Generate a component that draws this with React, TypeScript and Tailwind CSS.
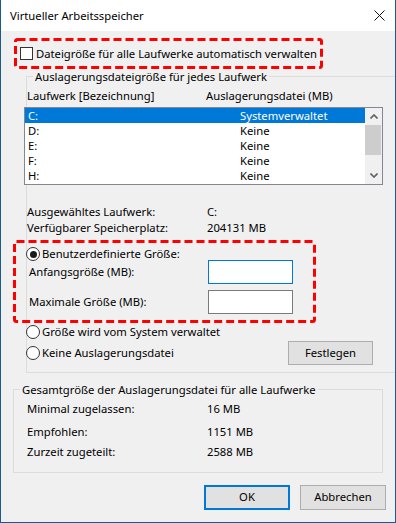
import React from 'react';

const drives = [
  { name: 'C:', size: 'Systemverwaltet', selected: true },
  { name: 'D:', size: 'Keine' },
  { name: 'E:', size: 'Keine' },
  { name: 'F:', size: 'Keine' },
  { name: 'H:', size: 'Keine' },
];

const totals = [
  { label: 'Minimal zugelassen:', value: '16 MB', top: 'mt-[4px]' },
  { label: 'Empfohlen:', value: '1151 MB', top: 'mt-[7px]' },
  { label: 'Zurzeit zugeteilt:', value: '2588 MB', top: 'mt-[4px]' },
];

// red annotation frame drawn over the dialog
const DashedFrame = ({ className }: { className: string }) => (
  <svg className={`pointer-events-none absolute ${className}`} width="100%" height="100%">
    <rect
      x="1.5"
      y="1.5"
      width="calc(100% - 3px)"
      height="calc(100% - 3px)"
      rx="2"
      fill="none"
      stroke="#ff0000"
      strokeWidth="3"
      strokeDasharray="8 4"
    />
  </svg>
);

const Radio = ({ checked }: { checked?: boolean }) => (
  <span className="flex h-[14px] w-[14px] shrink-0 items-center justify-center rounded-full border border-[#333333] bg-white">
    {checked && <span className="h-[7px] w-[7px] rounded-full bg-[#1a1a1a]" />}
  </span>
);

const Chevron = ({ up }: { up?: boolean }) => (
  <svg width="8" height="5" viewBox="0 0 8 5">
    <path
      d={up ? 'M0.5 4.5 L4 1 L7.5 4.5' : 'M0.5 0.5 L4 4 L7.5 0.5'}
      fill="none"
      stroke="#606060"
      strokeWidth="1.6"
    />
  </svg>
);

export default function App() {
  return (
    <div className="flex h-[523px] w-[396px] flex-col border-x border-b border-[#1c5a8a] bg-[#f0f0f0] font-['Noto_Sans',sans-serif] text-[11.25px] text-black">
      {/* Title bar */}
      <div className="flex h-[31px] shrink-0 items-center justify-between bg-white pl-[9px] pr-[10px]">
        <span className="leading-[16px]">Virtueller Arbeitsspeicher</span>
        <svg width="11" height="11" viewBox="0 0 11 11">
          <path d="M0.5 0.5 L10.5 10.5 M10.5 0.5 L0.5 10.5" stroke="#111" strokeWidth="1" />
        </svg>
      </div>

      {/* Automatic checkbox */}
      <div className="relative ml-[13px] mt-[7px] flex h-[31px] w-[309px] items-center pl-[6px]">
        <DashedFrame className="left-0 top-0" />
        <span className="h-[13px] w-[13px] border border-[#333333] bg-white" />
        <span className="ml-[3px] leading-[15px]">Dateigröße für alle Laufwerke automatisch verwalten</span>
      </div>

      {/* Per-drive group */}
      <div className="relative ml-[25px] mt-[7px] flex h-[297px] flex-col border border-r-0 border-[#dcdcdc]">
        <div className="-mt-[8px] ml-[6px] w-fit bg-[#f0f0f0] px-[2px] leading-[15px]">
          Auslagerungsdateigröße für jedes Laufwerk
        </div>

        <div className="mt-[4px] flex leading-[15px]">
          <span className="w-[179px]">Laufwerk [Bezeichnung]</span>
          <span>Auslagerungsdatei (MB)</span>
        </div>

        <div className="-ml-[3px] mt-[4px] flex h-[78px] w-[359px] border border-[#828790] bg-white">
          <div className="flex w-[340px] flex-col">
            {drives.map((d) => (
              <div
                key={d.name}
                className={`flex h-[15px] items-center leading-[15px] ${d.selected ? 'bg-[#0078d7] text-white' : ''}`}
              >
                <span className="w-[215px] pl-[3px]">{d.name}</span>
                <span>{d.size}</span>
              </div>
            ))}
          </div>
          <div className="flex w-[17px] flex-col bg-[#f0f0f0]">
            <div className="flex h-[17px] items-center justify-center">
              <Chevron up />
            </div>
            <div className="h-[30px] w-[16px] bg-[#cdcdcd]" />
            <div className="flex-1" />
            <div className="flex h-[17px] items-center justify-center">
              <Chevron />
            </div>
          </div>
        </div>

        <div className="mt-[19px] flex h-[16px] items-center">
          <span className="w-[180px]">Ausgewähltes Laufwerk:</span>
          <span>C:</span>
        </div>
        <div className="flex h-[16px] items-center">
          <span className="w-[180px]">Verfügbarer Speicherplatz:</span>
          <span>204131 MB</span>
        </div>

        <DashedFrame className="-left-[14px] top-[163px] h-[83px] w-[303px]" />

        <div className="-ml-[1px] mt-[12px] flex h-[12px] items-center">
          <Radio checked />
          <span className="ml-[2px]">Benutzerdefinierte Größe:</span>
        </div>
        <div className="flex h-[24px] items-center">
          <span className="w-[181px] pl-[2px]">Anfangsgröße (MB):</span>
          <span className="h-[24px] w-[85px] border border-[#0078d7] bg-white" />
        </div>
        <div className="mt-[6px] flex h-[24px] items-center">
          <span className="w-[181px] pl-[2px]">Maximale Größe (MB):</span>
          <span className="h-[24px] w-[85px] border border-[#7a7a7a] bg-white" />
        </div>

        <div className="-ml-[1px] mt-[10px] flex h-[16px] items-center">
          <Radio />
          <span className="ml-[2px]">Größe wird vom System verwaltet</span>
        </div>
        <div className="-ml-[1px] mt-[1px] flex h-[24px] items-center">
          <div className="flex w-[262px] items-center">
            <Radio />
            <span className="ml-[2px]">Keine Auslagerungsdatei</span>
          </div>
          <button className="h-[24px] w-[85px] border border-[#adadad] bg-[#e1e1e1]">Festlegen</button>
        </div>
      </div>

      {/* Totals group */}
      <div className="ml-[12px] mt-[16px] flex h-[84px] w-[370px] flex-col border border-[#dcdcdc]">
        <div className="-mt-[8px] ml-[6px] w-fit bg-[#f0f0f0] px-[2px] leading-[15px]">
          Gesamtgröße der Auslagerungsdatei für alle Laufwerke
        </div>
        {totals.map((t) => (
          <div key={t.label} className={`flex h-[16px] items-center pl-[13px] ${t.top}`}>
            <span className="w-[180px]">{t.label}</span>
            <span>{t.value}</span>
          </div>
        ))}
      </div>

      {/* Dialog buttons */}
      <div className="mr-[9px] mt-[12px] flex justify-end gap-[10px]">
        <button className="h-[25px] w-[86px] border-2 border-[#0078d7] bg-[#e1e1e1]">OK</button>
        <button className="h-[25px] w-[86px] border border-[#adadad] bg-[#e1e1e1]">Abbrechen</button>
      </div>
    </div>
  );
}
